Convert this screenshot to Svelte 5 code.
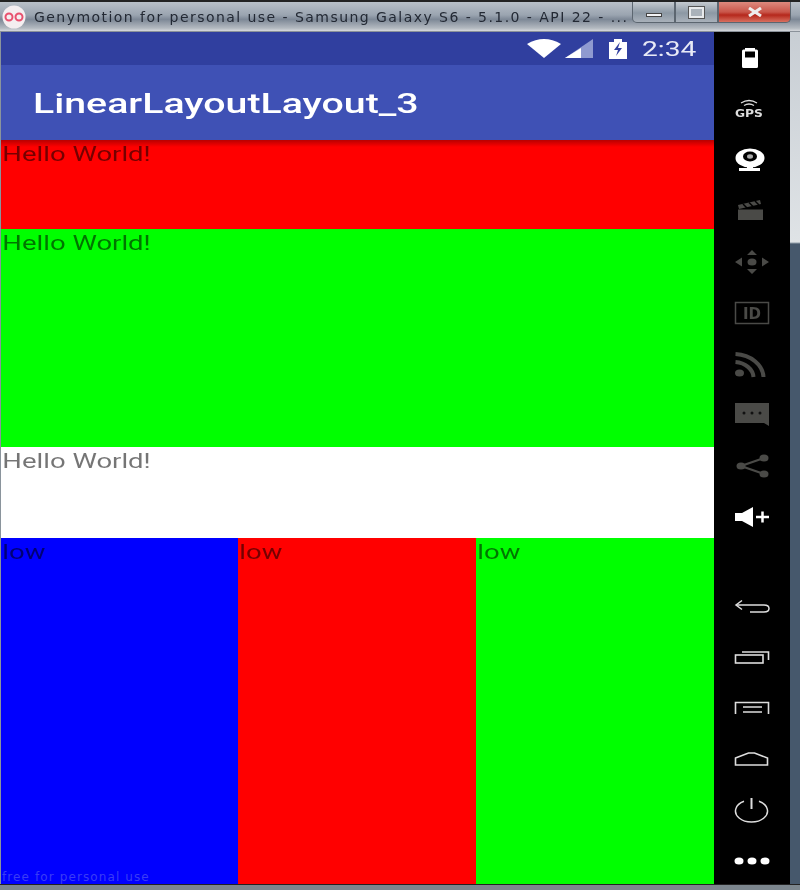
<script>
  const topIcons = ["battery", "gps", "webcam", "clapper", "dpad", "id", "rss", "sms", "share", "volume"];
  const bottomIcons = ["back", "recent", "menu", "home", "power", "dots"];
  const dimIcons = ["clapper", "dpad", "id", "rss", "sms", "share"];
</script>

{#snippet sideIcon(name)}
  <div class="side-icon" class:dim={dimIcons.includes(name)}>
    <svg width="40" height="40" viewBox="0 0 40 40">
      {#if name === "battery"}
        <path d="M10 13 q0 -1.500 1.500 -1.500 h1.500 v-1.500 h10 v1.500 h1.500 q1.500 0 1.500 1.500 v15.500 q0 1.500 -1.500 1.500 h-13 q-1.500 0 -1.500 -1.500z M13 13.500 v6 h10 v-6z" fill="#fff" fill-rule="evenodd" />
      {:else if name === "gps"}
        <path d="M9 14 q8 -5 16 0 M12 16.500 q5 -3 10 0" fill="none" stroke="#ddd" stroke-width="1.300" />
        <text x="3" y="28" textLength="28" lengthAdjust="spacingAndGlyphs" class="gps-text">GPS</text>
      {:else if name === "webcam"}
        <ellipse cx="18" cy="18" rx="14.500" ry="9.500" fill="#fff" />
        <ellipse cx="18" cy="16.500" rx="7" ry="5" fill="#000" />
        <ellipse cx="18" cy="16.500" rx="3" ry="2.200" fill="#aaa" />
        <path d="M15 26 h6 v2 h7 v3 h-21 v-3 h8z" fill="#fff" />
      {:else if name === "clapper"}
        <path d="M6 14 l22 -5 l1 4 l-22 5z" fill="currentColor" />
        <path d="M11 13 l4 4 M17 11.500 l4 4 M23 10 l4 4" stroke="#000" stroke-width="1.500" fill="none" />
        <path d="M6 18.500 h25 v10.500 h-25z" fill="currentColor" />
      {:else if name === "dpad"}
        <path d="M20 8 l5 5 h-10z M20 32 l-5 -5 h10z M3 20 l7 -4.500 v9z M37 20 l-7 4.500 v-9z" fill="currentColor" />
        <ellipse cx="20" cy="20" rx="4.500" ry="3.500" fill="currentColor" />
      {:else if name === "id"}
        <rect x="3.500" y="9.500" width="33" height="21" fill="none" stroke="currentColor" stroke-width="1.500" />
        <text x="20" y="26" text-anchor="middle" class="id-text">ID</text>
      {:else if name === "rss"}
        <path d="M3.500 10 a30 24 0 0 1 28 23 M3.500 18 a20 16 0 0 1 18 15" fill="none" stroke="currentColor" stroke-width="4" />
        <ellipse cx="7.500" cy="29" rx="4.500" ry="3.500" fill="currentColor" />
      {:else if name === "sms"}
        <path d="M3 8 h34 v23 l-5 -3 h-29z" fill="currentColor" />
        <circle cx="12" cy="18" r="1.500" fill="#111" />
        <circle cx="20" cy="18" r="1.500" fill="#111" />
        <circle cx="28" cy="18" r="1.500" fill="#111" />
      {:else if name === "share"}
        <path d="M32 12 L9 20 L32 28" fill="none" stroke="currentColor" stroke-width="2.200" />
        <ellipse cx="32" cy="12" rx="4.500" ry="3.500" fill="currentColor" />
        <ellipse cx="9" cy="20" rx="4.500" ry="3.500" fill="currentColor" />
        <ellipse cx="32" cy="28" rx="4.500" ry="3.500" fill="currentColor" />
      {:else if name === "volume"}
        <path d="M3 16 h7 l11 -6 v20 l-11 -6 h-7z" fill="#fff" />
        <path d="M24 20 h13 M30.500 14.500 v11" stroke="#fff" stroke-width="2.500" fill="none" />
      {:else if name === "back"}
        <path d="M4 19 h28 q5 0 5 3.500 q0 3.500 -5 3.500 h-14" fill="none" stroke="#ddd" stroke-width="1.500" />
        <path d="M10 14.500 l-6 4.500 l6 4.500" fill="none" stroke="#ddd" stroke-width="1.500" />
      {:else if name === "recent"}
        <rect x="3.500" y="18" width="27.500" height="8" fill="none" stroke="#ddd" stroke-width="1.600" />
        <path d="M10 15 h26.500 v8" fill="none" stroke="#ddd" stroke-width="1.600" />
      {:else if name === "menu"}
        <path d="M3.500 26 v-11.500 h33 v11.500" fill="none" stroke="#ddd" stroke-width="1.600" />
        <path d="M11 19 h19 M11 24 h19" fill="none" stroke="#ddd" stroke-width="1.600" />
      {:else if name === "home"}
        <path d="M3.500 19 l13 -5 h6 l13 5 v7 h-32z" fill="none" stroke="#ddd" stroke-width="1.600" />
      {:else if name === "power"}
        <path d="M12 11.300 A16 11 0 1 0 27 11.300" fill="none" stroke="#ddd" stroke-width="1.500" />
        <path d="M19.500 8 v11" stroke="#ddd" stroke-width="2" />
      {:else if name === "dots"}
        <ellipse cx="7" cy="20" rx="4.500" ry="3.500" fill="#fff" />
        <ellipse cx="20" cy="20" rx="4.500" ry="3.500" fill="#fff" />
        <ellipse cx="33" cy="20" rx="4.500" ry="3.500" fill="#fff" />
      {/if}
    </svg>
  </div>
{/snippet}

<div class="window">
  <header class="titlebar">
    <svg class="app-logo" width="26" height="24" viewBox="0 0 26 24">
      <circle cx="13" cy="12" r="11.500" fill="#f4eef0" />
      <circle cx="8" cy="12" r="3.500" fill="none" stroke="#e8506e" stroke-width="2" />
      <circle cx="18" cy="12" r="3.500" fill="none" stroke="#e8506e" stroke-width="2" />
    </svg>
    <span class="title">Genymotion for personal use - Samsung Galaxy S6 - 5.1.0 - API 22 - ...</span>
    <div class="controls">
      <div class="ctl"><span class="min"></span></div>
      <div class="ctl"><span class="max"></span></div>
      <div class="ctl close">
        <svg width="16" height="10" viewBox="0 0 16 10"><path d="M2 1 L14 9 M14 1 L2 9" stroke="#eee" stroke-width="3" /></svg>
      </div>
    </div>
  </header>

  <div class="body">
    <div class="device">
      <div class="statusbar">
        <svg class="wifi" width="34" height="20" viewBox="0 0 34 20"><path d="M0 5 Q17 -5 34 5 L17 19z" fill="#fff" /></svg>
        <svg class="signal" width="28" height="20" viewBox="0 0 28 20">
          <path d="M28 0 V19 H0z" fill="#8f9ad0" />
          <path d="M16 9 V19 H0z" fill="#fff" />
        </svg>
        <svg class="charge" width="18" height="20" viewBox="0 0 18 20">
          <path d="M0 3 h5 v-3 h8 v3 h5 v17 h-18z" fill="#fff" />
          <path d="M11 3 L5 11 H9 L7 17 L13 9 H9z" fill="#303f9f" />
        </svg>
        <span class="clock">2:34</span>
      </div>
      <div class="appbar"><span class="app-title">LinearLayoutLayout_3</span></div>
      <div class="block red first"><span class="hello">Hello World!</span></div>
      <div class="block green mid"><span class="hello">Hello World!</span></div>
      <div class="block white"><span class="hello">Hello World!</span></div>
      <div class="cols">
        <div class="col blue"><span class="low">low</span><span class="free">free for personal use</span></div>
        <div class="col red"><span class="low">low</span></div>
        <div class="col green"><span class="low">low</span></div>
      </div>
    </div>
    <aside class="sidebar">
      <div class="group">
        {#each topIcons as name}
          {@render sideIcon(name)}
        {/each}
      </div>
      <div class="group bottom">
        {#each bottomIcons as name}
          {@render sideIcon(name)}
        {/each}
      </div>
    </aside>
    <div class="edge"></div>
  </div>
  <div class="foot"></div>
</div>

<style>
  :global(body) { margin: 0; background: #8a949c; }
  .window {
    width: 800px;
    height: 890px;
    display: flex;
    flex-direction: column;
    overflow: hidden;
    font-family: "Roboto", "Liberation Sans", sans-serif;
  }
  .titlebar {
    height: 32px;
    box-sizing: border-box;
    flex: none;
    display: flex;
    align-items: center;
    border-top: 2px solid #222;
    border-bottom: 1px solid #8b929a;
    background: linear-gradient(to bottom, #b9c0c8 0%, #9aa4b0 45%, #7d8896 60%, #b3b9c0 90%, #d5d8dc 100%);
    padding-left: 1px;
  }
  .app-logo { flex: none; margin-right: 7px; }
  .title {
    font-family: "DejaVu Sans", sans-serif;
    font-size: 14px;
    letter-spacing: 1.45px;
    color: #232934;
    white-space: nowrap;
    filter: blur(0.3px);
  }
  .controls {
    position: absolute;
    top: 2px;
    left: 632px;
    display: flex;
    height: 21px;
  }
  .ctl {
    width: 43px;
    display: flex;
    align-items: center;
    justify-content: center;
    border: 1px solid #5c6670;
    border-top: none;
    box-sizing: border-box;
    background: linear-gradient(to bottom, #c4cad0, #8c98a4 55%, #a9b1ba);
  }
  .ctl:first-child { border-radius: 0 0 0 5px; }
  .ctl .min { display: block; width: 16px; height: 4px; margin-top: 6px; background: #f2f3f5; border: 1px solid #444; box-sizing: border-box; }
  .ctl .max { display: block; width: 15px; height: 11px; background: #aab2ba; border: 2px solid #e8eaec; outline: 1px solid #555; box-sizing: border-box; }
  .ctl.close {
    width: 73px;
    border-radius: 0 0 5px 0;
    background: linear-gradient(to bottom, #dd8a7e, #c9564a 50%, #b5281c 65%, #d87060);
  }
  .body { flex: 1; display: flex; min-height: 0; }
  .device {
    margin-left: 1px;
    width: 713px;
    flex: none;
    display: flex;
    flex-direction: column;
  }
  .statusbar {
    height: 33px;
    flex: none;
    background: #303f9f;
    display: flex;
    align-items: center;
    color: #fff;
    padding-left: 526px;
    box-sizing: border-box;
  }
  .wifi { margin-top: 1px; }
  .signal { margin-left: 4px; margin-top: 1px; margin-right: 16px; width: 28px; }
  .charge { margin-top: 1px; margin-right: 15px; flex: none; }
  .clock {
    display: inline-block;
    font-size: 21px;
    color: #e8eaf6;
    transform: scaleX(1.34);
    transform-origin: left center;
    filter: blur(0.3px);
  }
  .appbar {
    height: 75px;
    flex: none;
    background: #3f51b5;
    color: #fff;
    display: flex;
    align-items: center;
    padding: 3px 0 0 32px;
    box-sizing: border-box;
  }
  .app-title {
    display: inline-block;
    font-size: 27px;
    font-weight: 500;
    transform: scaleX(1.455);
    transform-origin: left center;
    filter: blur(0.3px);
  }
  .block { flex: none; box-sizing: border-box; }
  .first { height: 89px; background-image: linear-gradient(to bottom, #b80000, #ff0000 7px); }
  .mid { height: 218px; }
  .white { height: 91px; }
  .red { background-color: #ff0000; }
  .green { background-color: #00ff00; }
  .white { background-color: #fff; }
  .blue { background-color: #0000ff; }
  .hello, .low {
    display: block;
    width: max-content;
    font-family: "Roboto", sans-serif;
    font-size: 21px;
    line-height: 26px;
    margin-top: 1px;
    color: rgba(0, 0, 0, 0.54);
    padding-left: 1px;
    transform: scaleX(1.31);
    transform-origin: left center;
    filter: blur(0.3px);
  }
  .cols { flex: 1; display: grid; grid-template-columns: 237px 238px 238px; min-height: 0; }
  .col { display: flex; flex-direction: column; }
  .free {
    margin-top: auto;
    font-family: "DejaVu Sans", sans-serif;
    font-size: 12px;
    line-height: 14px;
    letter-spacing: 1.1px;
    color: #3a3cf5;
    padding-left: 1px;
  }
  .sidebar {
    width: 76px;
    flex: none;
    background: #000;
    box-sizing: border-box;
    display: flex;
    flex-direction: column;
    justify-content: space-between;
  }
  .group { display: flex; flex-direction: column; }
  .group.bottom { margin-bottom: -2px; }
  .side-icon {
    height: 51px;
    display: flex;
    align-items: center;
    justify-content: center;
    color: #4a4a47;
  }
  .side-icon svg { display: block; filter: blur(0.3px); }
  .gps-text { font-family: "DejaVu Sans", sans-serif; font-size: 10px; font-weight: 700; fill: #ddd; }
  .id-text { font-family: "DejaVu Sans", sans-serif; font-size: 15px; font-weight: 700; fill: #4a4a47; }
  .edge {
    flex: 1;
    background: linear-gradient(to bottom, #c8ced4 0, #dfe3e6 210px, #46586c 212px, #46586c 100%);
  }
  .foot { height: 5px; flex: none; border-top: 1px solid #222; background: #7c868e; }
</style>
